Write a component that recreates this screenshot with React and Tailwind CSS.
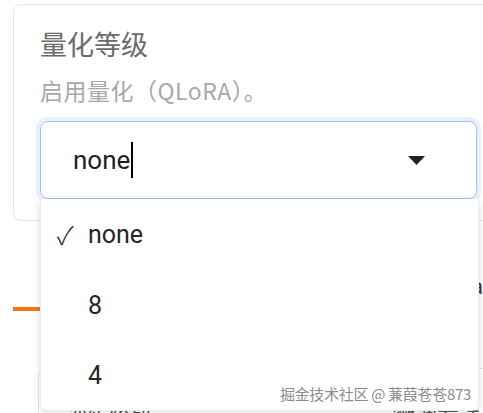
import React from "react";

const cjk = { fontFamily: '"Noto Sans CJK SC", "Noto Sans", sans-serif' };
const latin = { fontFamily: 'Roboto, "Noto Sans CJK SC", sans-serif' };

export default function App() {
  return (
    <div className="relative w-[483px] h-[413px] overflow-hidden bg-white" style={cjk}>
      {/* quantization card */}
      <div className="ml-[13px] mt-[4px] w-[492px] rounded-lg border border-[#e5e7eb] pl-[26px] pt-[21px] pb-[21px]">
        <div className="text-[27px] leading-[36px] text-[#6b6b6b]">量化等级</div>
        <div className="mt-[12px] text-[23px] leading-[32px] tracking-[0.5px] text-[#a8a8a8]">启用量化（QLoRA）。</div>
        <div className="mt-[15px] w-[437px] rounded-lg ring-4 ring-[#e8f0fd]">
          <div className="flex h-[78px] items-center rounded-lg border border-[#9cc3f5] bg-white pl-[32px] pr-[51px]">
            <span className="text-[26px] text-[#1f1f1f]" style={latin}>none</span>
            <span className="ml-[1px] h-[36px] w-[2px] bg-black" />
            <span className="ml-auto">
              <svg width="17" height="9" viewBox="0 0 17 9">
                <path d="M0 0 H17 L8.5 9 Z" fill="#222" />
              </svg>
            </span>
          </div>
        </div>
      </div>

      {/* tabs behind */}
      <div className="mt-[52px] ml-[13px] flex h-[38px] items-start">
        <div className="w-[140px] h-[38px] border-b-[4px] border-[#f97316]" />
        <div className="ml-[326px] pt-[2px] text-[22px] leading-[24px] text-[#333]" style={latin}>
          a
        </div>
      </div>

      {/* next card behind */}
      <div className="mt-[57px] ml-[38px] w-[470px] h-[80px] rounded-lg border border-[#e5e7eb] flex justify-between px-[26px] pt-[30px] text-[22px] text-[#555]">
        <span>训练阶段</span>
        <span>微调方法</span>
      </div>

      {/* dropdown menu */}
      <div
        className="absolute left-[40px] top-[199px] w-[439px] h-[212px] rounded-b-lg bg-white shadow-[0_2px_8px_rgba(0,0,0,0.12)] border border-t-0 border-[#eceef1] text-[25px] text-[#262626]"
        style={latin}
      >
        <div className="flex h-[71px] items-center pl-[16px]">
          <span className="w-[31px] text-[25px] font-light" style={{ fontFamily: '"Noto Sans CJK SC", sans-serif' }}>✓</span>
          <span>none</span>
        </div>
        <div className="flex h-[71px] items-center pl-[47px]">8</div>
        <div className="flex h-[70px] items-center pl-[47px]">4</div>
      </div>

      {/* watermark */}
      <div
        className="absolute right-[12px] top-[384px] text-[15px] leading-[20px] tracking-[-0.3px] text-[#8c8c8c]"
        style={{ ...cjk, textShadow: "0 0 2px #fff" }}
      >
        掘金技术社区 @ 蒹葭苍苍873
      </div>
    </div>
  );
}
